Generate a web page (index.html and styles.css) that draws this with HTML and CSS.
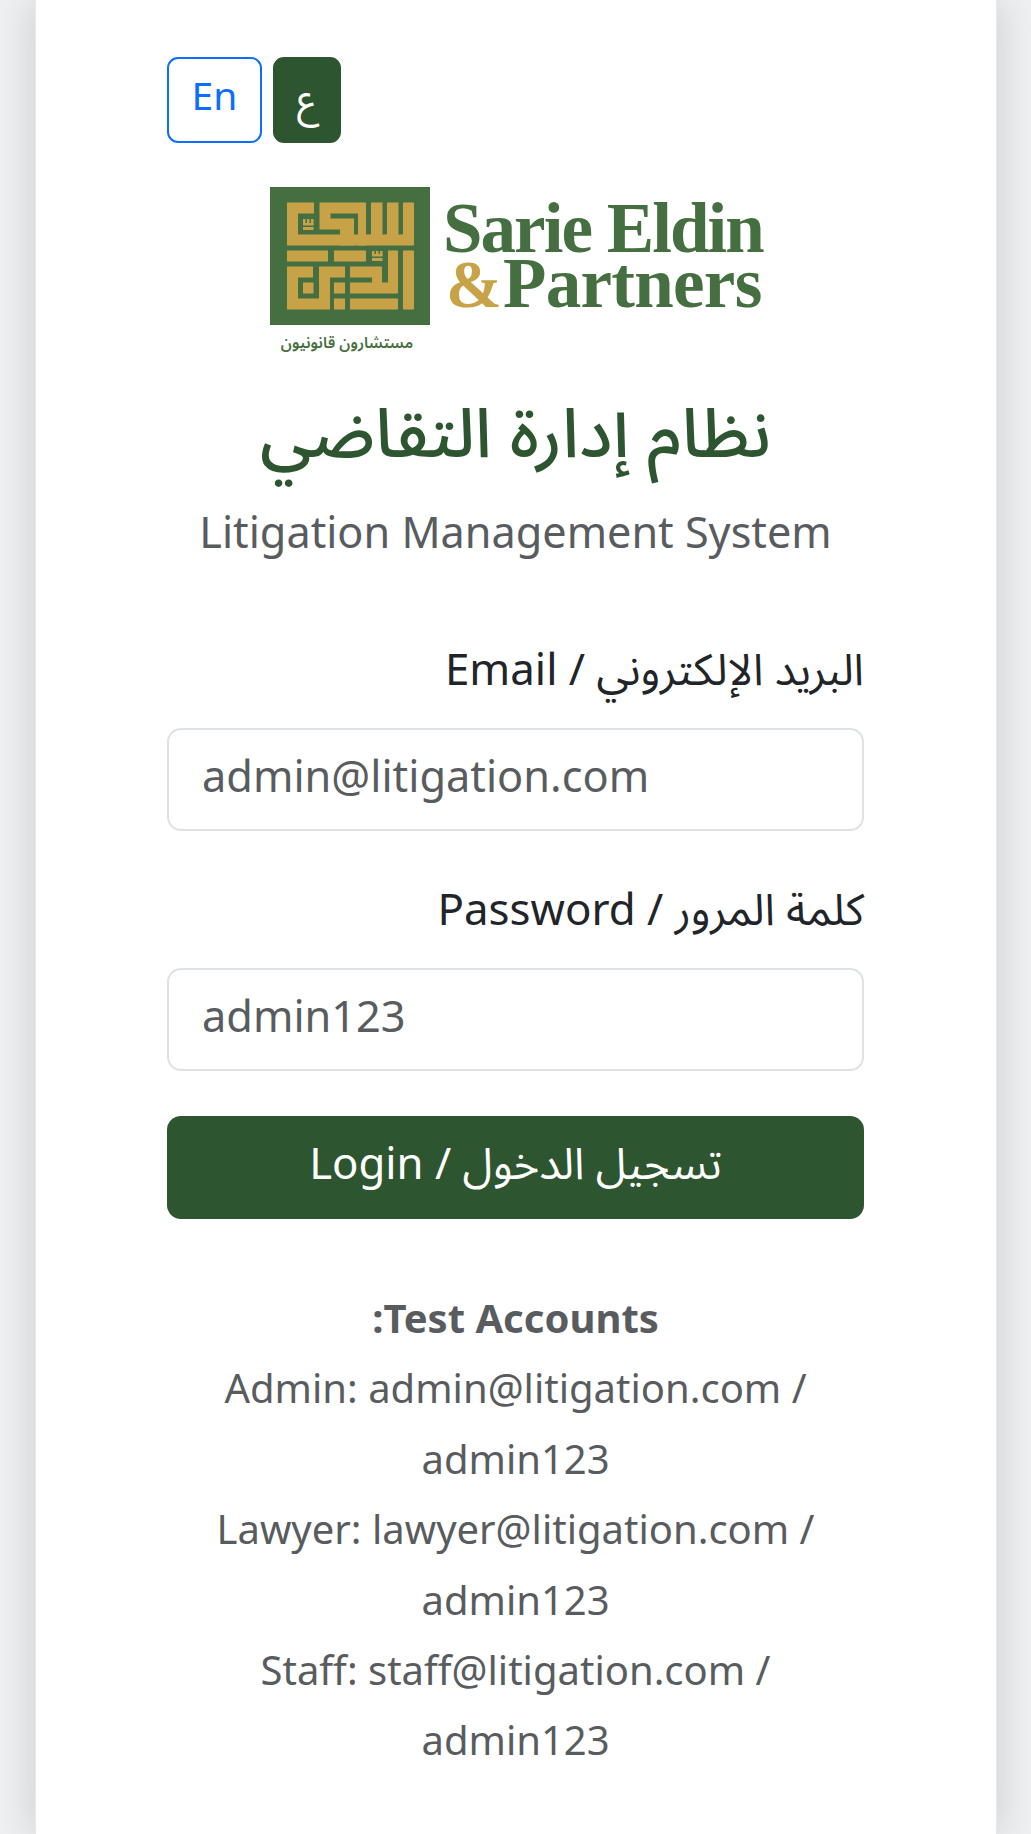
FILE: index.html
```html
<!DOCTYPE html>
<html lang="ar" dir="rtl">
<head>
<meta charset="utf-8">
<title>نظام إدارة التقاضي</title>
<link rel="stylesheet" href="styles.css">
</head>
<body>
<main class="card">
  <div class="langs" dir="ltr">
    <button class="lang lang-en" type="button">En</button>
    <button class="lang lang-ar" type="button">ع</button>
  </div>
  <div class="logo-wrap" dir="ltr">
    <svg class="logo" viewBox="0 0 500 172" width="500" height="172" role="img" aria-label="Sarie Eldin and Partners">
      <rect x="0" y="0" width="160" height="138" fill="#456f40"/>
      <g fill="#c7a246" transform="translate(-270,-187)">
        <path d="M287 202.5H314V213.5H298V234.5H414V245.5H287Z"/>
        <path d="M319.5 202.5H366V245.5H358V213.5H330.5V218.5H354V245.5H340V229.5H319.5Z"/>
        <rect x="371" y="202.5" width="11.5" height="33"/>
        <rect x="387" y="202.5" width="11.5" height="33"/>
        <rect x="403" y="202.5" width="11" height="33"/>
        <rect x="303" y="219" width="2.5" height="6"/>
        <rect x="307" y="219" width="2.5" height="6"/>
        <rect x="311" y="219" width="2.5" height="6"/>
        <rect x="303" y="223" width="10.5" height="2.5"/>
        <rect x="303" y="227" width="10.5" height="3"/>
        <rect x="287" y="250.5" width="41" height="11"/>
        <rect x="334" y="250.5" width="32" height="11"/>
        <path d="M287 266.5H313V277.5H298V298.5H319V266.5H345V277.5H330V309.5H287Z"/>
        <rect x="303" y="282.5" width="10.5" height="11"/>
        <rect x="334" y="282.5" width="11" height="11"/>
        <rect x="334" y="298.5" width="11" height="11"/>
        <path d="M350 266.5H382V282.5H388V250.5H398V293.5H350V282.5H372V277.5H350Z"/>
        <rect x="350" y="298.5" width="48" height="11"/>
        <rect x="403" y="250.5" width="11" height="59"/>
        <rect x="372" y="251" width="2.5" height="5"/>
        <rect x="376" y="251" width="2.5" height="5"/>
        <rect x="380" y="251" width="2.5" height="5"/>
        <rect x="372" y="254" width="10.5" height="2.5"/>
        <rect x="372" y="258" width="10.5" height="3"/>
      </g>
      <text class="logo-ar" x="77" y="161" text-anchor="middle">مستشارون قانونيون</text>
      <text class="logo-text logo-top" x="173" y="65">Sarie Eldin</text>
      <text class="logo-text logo-amp" x="176" y="120">&amp;</text>
      <text class="logo-text logo-bottom" x="233" y="120">Partners</text>
    </svg>
  </div>
  <h1 class="title">نظام إدارة التقاضي</h1>
  <p class="subtitle">Litigation Management System</p>
  <form class="form">
    <label class="label" for="email">البريد الإلكتروني / Email</label>
    <input class="input" id="email" type="text" dir="ltr" value="admin@litigation.com">
    <label class="label" for="password">كلمة المرور / Password</label>
    <input class="input" id="password" type="text" dir="ltr" value="admin123">
    <button class="submit" type="button">تسجيل الدخول / Login</button>
  </form>
  <div class="accounts">
    <p class="accounts-head">Test Accounts:</p>
    <p>Admin: admin@litigation.com / admin123</p>
    <p>Lawyer: lawyer@litigation.com / admin123</p>
    <p>Staff: staff@litigation.com / admin123</p>
  </div>
</main>
</body>
</html>
```
FILE: styles.css
```css
* { box-sizing: border-box; }
html, body { margin: 0; height: 1834px; overflow: hidden; }
body {
  background: #eef0f2;
  font-family: "Noto Sans", "Noto Sans Arabic", "Noto Naskh Arabic", "DejaVu Sans", sans-serif;
  color: #212529;
  padding: 0 34px 0 35px;
}
.card {
  background: #fff;
  height: 1834px;
  padding: 57px 132px 0 131px;
  box-shadow: 0 0 40px rgba(0,0,0,.16);
  border-right: 1px solid #e6e8ec;
  border-left: 1px solid #e6e8ec;
}
.langs { display: flex; gap: 11px; }
.lang {
  height: 86px;
  font-family: inherit;
  font-size: 39px;
  border-radius: 11px;
  padding: 0 0 12px;
  background: #fff;
}
.lang-en { width: 95px; color: #0d6efd; border: 2.5px solid #0d6efd; }
.lang-ar { width: 68px; color: #fff; background: #2d5530; border: 2px solid #2d5530; padding: 0; }
.logo-wrap { display: flex; justify-content: flex-start; margin-top: 44px; padding-left: 103px; }
.logo { display: block; flex: none; }
.logo-text { font: bold 71px "Liberation Serif", serif; fill: #456f40; }
.logo-top { letter-spacing: -1.95px; }
.logo-bottom { letter-spacing: -0.7px; }
.logo-amp { fill: #c7a246; font-size: 67px; }
.logo-ar { font: 600 15.5px "Noto Sans Arabic", "DejaVu Sans", sans-serif; fill: #456f40; direction: rtl; }
.title {
  margin: 30px 0 0;
  text-align: center;
  font-size: 68.5px;
  font-weight: 500;
  line-height: 84px;
  color: #2d5530;
}
.subtitle {
  margin: 30px 0 0;
  text-align: center;
  font-size: 43.2px;
  line-height: 58px;
  color: #595c5f;
}
.form { display: flex; flex-direction: column; margin-top: 76px; }
.label { font-size: 43.8px; line-height: 62px; margin-bottom: 29px; }
.input {
  height: 103px;
  border: 2.5px solid #dee2e6;
  border-radius: 14px;
  padding: 0 33px 8px;
  font-family: inherit;
  font-size: 43.3px;
  color: #595c5f;
  margin-bottom: 46px;
  outline: none;
}
.input:last-of-type { margin-bottom: 45px; }
.submit {
  height: 103px;
  border: 0;
  border-radius: 14px;
  background: #2d5530;
  color: #fff;
  font-family: inherit;
  font-size: 43.7px;
  padding: 0 0 6px;
}
.accounts {
  margin-top: 64px;
  text-align: center;
  font-size: 40px;
  line-height: 70.4px;
  color: #595c5f;
}
.accounts p { margin: 0; }
.accounts-head { font-weight: 700; }
```
